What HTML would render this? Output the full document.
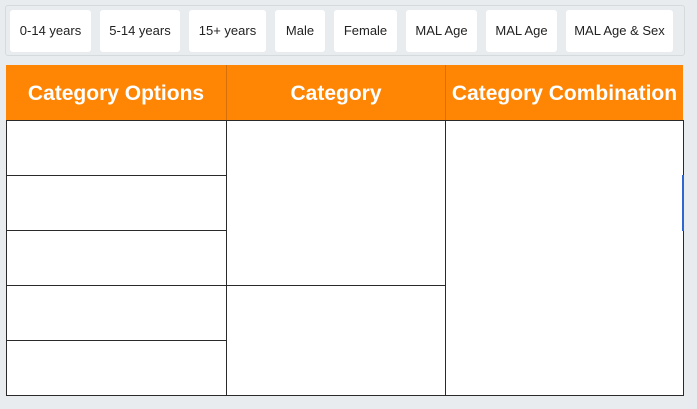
<!DOCTYPE html>
<html><head><style>
body{margin:0;width:697px;height:409px;background:#e8ecef;position:relative;overflow:hidden;font-family:"Liberation Sans",sans-serif}
.bar{position:absolute;left:5px;top:5px;width:680px;height:51px;border:1px solid #d5dadd;box-sizing:border-box;border-radius:3px;background:#e8ecef}
.b{position:absolute;top:10px;height:42px;background:#fff;border-radius:3px;font-size:13px;color:#222;line-height:42px;text-align:center}
.h{position:absolute;top:65px;height:55px;background:#ff8505;color:#fff;font-weight:bold;font-size:21px;line-height:58px;text-align:center;white-space:nowrap}
.c{position:absolute;background:#fff;box-sizing:border-box;border:1px solid #2a2a2a}
</style></head><body>
<div class="bar"></div>
<div class="b" style="left:10px;width:81px">0-14 years</div>
<div class="b" style="left:100px;width:80px">5-14 years</div>
<div class="b" style="left:189px;width:77px">15+ years</div>
<div class="b" style="left:275px;width:50px">Male</div>
<div class="b" style="left:334px;width:63px">Female</div>
<div class="b" style="left:406px;width:71px">MAL Age</div>
<div class="b" style="left:486px;width:71px">MAL Age</div>
<div class="b" style="left:566px;width:107px">MAL Age &amp; Sex</div>

<div class="h" style="left:6px;width:220px;border-right:1px solid #d8700a">Category Options</div>
<div class="h" style="left:227px;width:218px;border-right:1px solid #d8700a">Category</div>
<div class="h" style="left:446px;width:237px">Category Combination</div>

<div class="c" style="left:6px;top:120px;width:221px;height:56px"></div>
<div class="c" style="left:6px;top:175px;width:221px;height:56px"></div>
<div class="c" style="left:6px;top:230px;width:221px;height:56px"></div>
<div class="c" style="left:6px;top:285px;width:221px;height:56px"></div>
<div class="c" style="left:6px;top:340px;width:221px;height:56px"></div>
<div class="c" style="left:226px;top:120px;width:220px;height:166px"></div>
<div class="c" style="left:226px;top:285px;width:220px;height:111px"></div>
<div class="c" style="left:445px;top:120px;width:239px;height:276px"></div>
<div style="position:absolute;left:682px;top:175px;width:2px;height:56px;background:#2f66d0"></div>
</body></html>
